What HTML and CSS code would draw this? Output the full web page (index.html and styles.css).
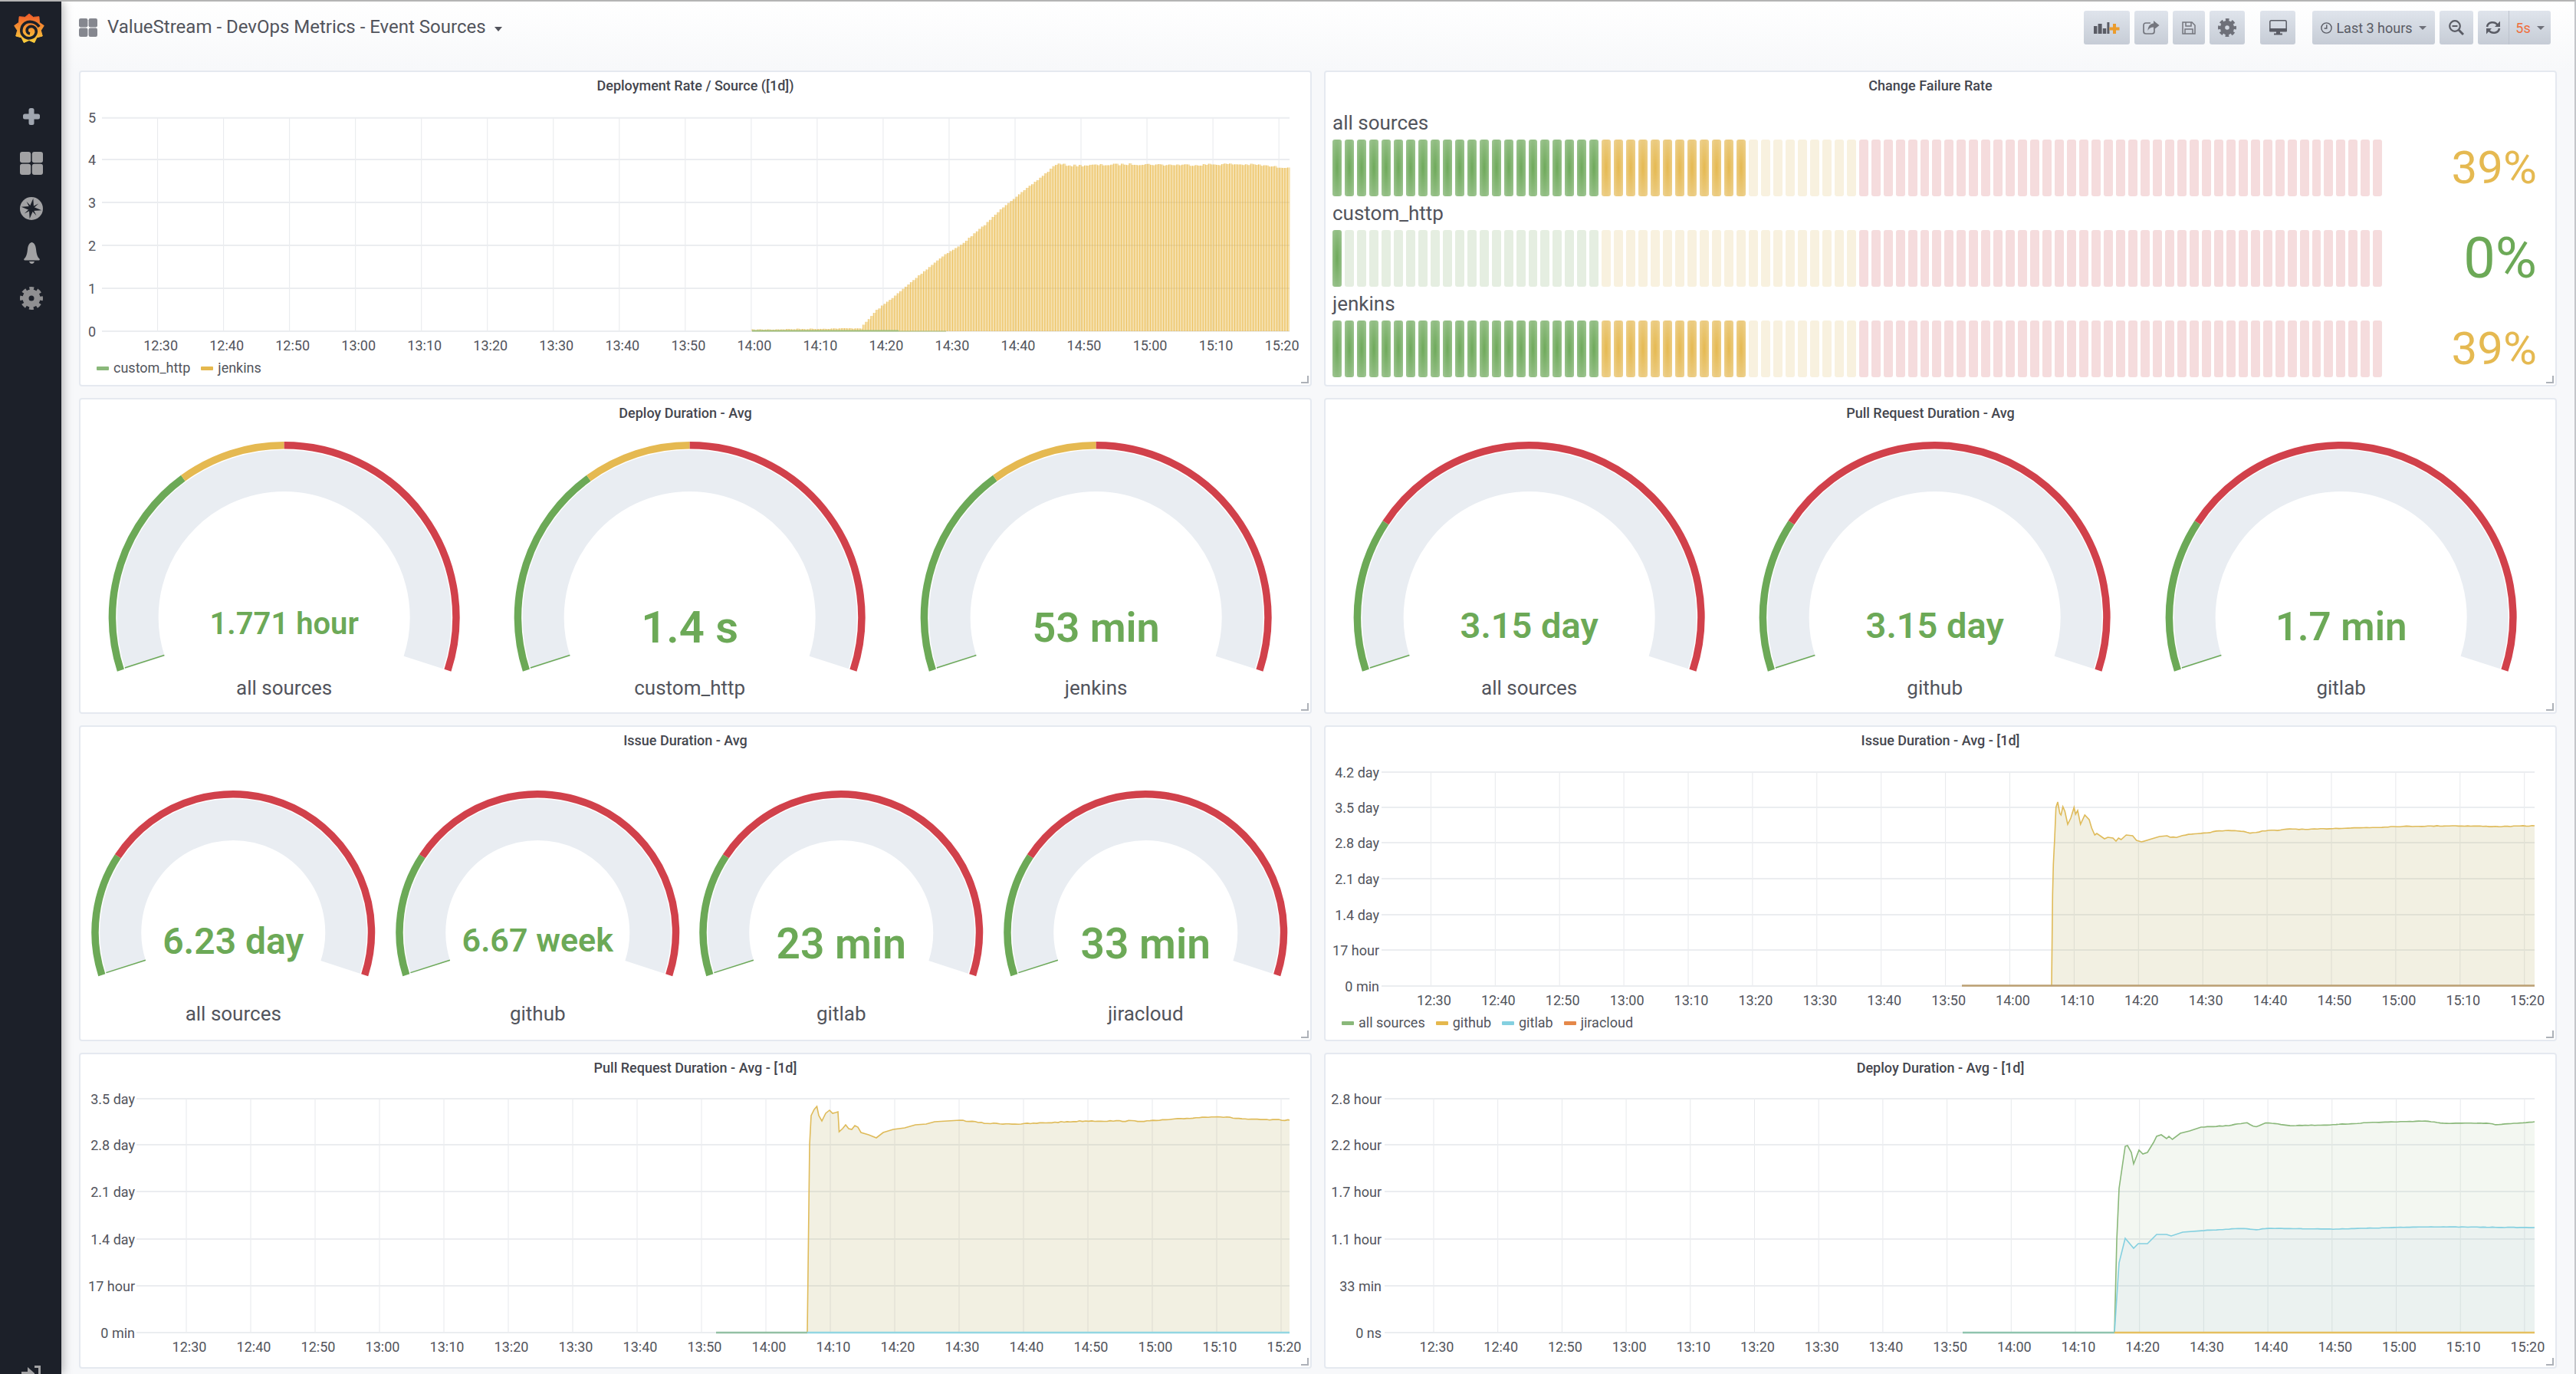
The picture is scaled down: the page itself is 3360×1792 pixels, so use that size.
FILE: index.html
```html
<!DOCTYPE html>
<html>
<head>
    <meta http-equiv="Content-Type" content="text/html; charset=utf-8" />
    <title>ValueStream - DevOps Metrics - Event Sources</title>
    <link rel="stylesheet" href="styles.css">
    <script src="script.js"></script>
</head>
<body>
<div class="app">
    <aside class="sidemenu">
        <svg class="logo" width="40" height="40" viewBox="0 0 40 40">
            <defs>
                <linearGradient id="logoGrad" x1="0" y1="0" x2="0" y2="1">
                    <stop offset="0" stop-color="#ef5a2a"/>
                    <stop offset="1" stop-color="#fbd03c"/>
                </linearGradient>
            </defs>
            <polygon fill="url(#logoGrad)" stroke="url(#logoGrad)" stroke-width="1" stroke-linejoin="round" points="20,1 25.3,5.4 32.9,4.7 33.4,12.3 39.3,16.5 35.3,22.7 37.3,30 30,31.9 26.8,38.6 20,35.5 13.2,38.6 10,31.9 2.7,30 4.7,22.7 0.7,16.5 6.6,12.3 7.1,4.7 14.7,5.4"/>
            <path fill="none" stroke="#1c2029" stroke-width="3.6" d="M33 18 C29 11 20 10 15 13 C9 17 8 26 13 30 C18 35 27 33 29 26 C30.5 20 25 16 20 18 C16 20 16 26 21 27"/>
        </svg>
        <div class="side-item side-item-first">
            <svg width="22" height="22" viewBox="0 0 22 22"><rect x="7.5" y="0" width="7" height="22" rx="2.5" fill="#a0a6b0"/><rect x="0" y="7.5" width="22" height="7" rx="2.5" fill="#a0a6b0"/></svg>
        </div>
        <div class="side-item">
            <svg width="30" height="30" viewBox="0 0 30 30" fill="#a2a2a4"><rect width="14.2" height="14.2" rx="3"/><rect x="15.8" width="14.2" height="14.2" rx="3"/><rect y="15.8" width="14.2" height="14.2" rx="3"/><rect x="15.8" y="15.8" width="14.2" height="14.2" rx="3"/></svg>
        </div>
        <div class="side-item">
            <svg width="30" height="30" viewBox="0 0 30 30"><circle cx="15" cy="15" r="15" fill="#a2a2a4"/><g transform="rotate(10 15 15)"><polygon fill="#1c2029" points="15,1.5 17.6,12.4 28.5,15 17.6,17.6 15,28.5 12.4,17.6 1.5,15 12.4,12.4"/><polygon fill="#1c2029" points="23,7 17,15 23,23 15,17 7,23 13,15 7,7 15,13"/></g></svg>
        </div>
        <div class="side-item">
            <svg width="23" height="28" viewBox="0 0 22 28" fill="#a2a2a4"><path d="M11 0 C7 1 6 5 5.5 9 C5 14 4 19 1 21.5 Q0 23 1.5 23.5 H20.5 Q22 23 21 21.5 C18 19 17 14 16.5 9 C16 5 15 1 11 0 Z"/><path d="M7.5 25 h7 q-1 3 -3.5 3 q-2.5 0 -3.5 -3 z"/></svg>
        </div>
        <div class="side-item">
            <svg width="30" height="30" viewBox="0 0 30 30" fill="none" stroke="#8f8f91"><circle cx="15" cy="15" r="7.5" stroke-width="8"/><circle cx="15" cy="15" r="12.5" stroke-width="5" stroke-dasharray="5.6 4.2" stroke-dashoffset="2.8"/></svg>
        </div>
        <svg class="side-bottom" width="26" height="28" viewBox="0 0 26 28" fill="#a2a2a4"><path d="M0 8 L8 8 L8 2 L17 10 V20 H0 Z"/><path d="M17 0 H25 V26 H17 V23 H22 V3 H17 Z"/></svg>
    </aside>

    <main class="main">
        <nav class="navbar">
            <svg class="nav-grid" width="24" height="24" viewBox="0 0 24 24" fill="#85878f"><rect width="11.4" height="11.4" rx="2.2"/><rect x="12.6" width="11.4" height="11.4" rx="2.2"/><rect y="12.6" width="11.4" height="11.4" rx="2.2"/><rect x="12.6" y="12.6" width="11.4" height="11.4" rx="2.2"/></svg>
            <span class="nav-title">ValueStream - DevOps Metrics - Event Sources</span>
            <i class="caret caret-title"></i>
            <div class="toolbar">
                <div class="btn btn-add">
                    <svg width="34" height="16" viewBox="0 0 34 16"><g fill="#5a5c65"><rect y="6" width="4.4" height="10"/><rect x="5.6" y="3" width="5" height="13"/><rect x="11.8" y="9" width="4.4" height="7"/><rect x="17.4" y="1" width="3" height="15"/></g><rect x="25" y="3" width="4" height="13" fill="#eb9c2d"/><rect x="20.5" y="7.5" width="13" height="4" fill="#eb9c2d"/></svg>
                </div>
                <div class="btn btn-share">
                    <svg width="22" height="18" viewBox="0 0 22 18"><path fill="none" stroke="#74767e" stroke-width="1.7" d="M10 3 H4 Q1 3 1 6 V14 Q1 17 4 17 H12 Q15 17 15 14 V11"/><path fill="#74767e" d="M14 0 L21.5 6 L14 12 V8.5 C10 8.5 8 10 6.5 13 C6.5 8 9 4 14 3.5 Z"/></svg>
                </div>
                <div class="btn btn-save">
                    <svg width="18" height="17" viewBox="0 0 18 17" fill="none" stroke="#74767e" stroke-width="1.5"><path d="M1 1 H13 L17 5 V16 H1 Z"/><path d="M5 1 V6 H12 V1"/><path d="M4 16 V10 H14 V16"/></svg>
                </div>
                <div class="btn btn-gear">
                    <svg width="24" height="24" viewBox="0 0 30 30" fill="none" stroke="#6e7079"><circle cx="15" cy="15" r="7.5" stroke-width="8"/><circle cx="15" cy="15" r="12.5" stroke-width="5" stroke-dasharray="5.6 4.2" stroke-dashoffset="2.8"/></svg>
                </div>
                <div class="btn btn-tv">
                    <svg width="23" height="20" viewBox="0 0 23 20" fill="#5a5c65"><path fill="none" stroke="#5a5c65" stroke-width="1.5" d="M2.5 0.8 H20.5 Q22.2 0.8 22.2 2.5 V13 H0.8 V2.5 Q0.8 0.8 2.5 0.8 Z"/><rect y="11" width="23" height="4.5" rx="1"/><rect x="9" y="15" width="5" height="3"/><rect x="6" y="17.5" width="11" height="2"/></svg>
                </div>
                <div class="btn btn-time">
                    <svg width="15" height="15" viewBox="0 0 15 15" fill="none" stroke="#5a5c65" stroke-width="1.4"><circle cx="7.5" cy="7.5" r="6.6"/><path d="M7.8 3.2 V8 H4.6"/></svg>
                    <span class="time-text">Last 3 hours</span>
                    <i class="caret"></i>
                </div>
                <div class="btn btn-zoom">
                    <svg width="20" height="20" viewBox="0 0 20 20" fill="none" stroke="#5a5c65"><circle cx="8" cy="8" r="6.8" stroke-width="2.2"/><path stroke-width="3" d="M13 13 L19 19"/><path stroke-width="2" d="M4.5 8 H11.5"/></svg>
                </div>
                <div class="btn btn-refresh">
                    <div class="refresh-icon">
                        <svg width="20" height="18" viewBox="0 0 20 18" fill="none" stroke="#5a5c65" stroke-width="2.6"><path d="M2 8 C3 1.5 12 0 16 6"/><path d="M18 10 C17 16.5 8 18 4 12"/><polygon fill="#5a5c65" stroke="none" points="19,0.5 19,8 12,8"/><polygon fill="#5a5c65" stroke="none" points="1,17.5 1,10 8,10"/></svg>
                    </div>
                    <div class="refresh-rate"><span class="rate-text">5s</span><i class="caret"></i></div>
                </div>
            </div>
        </nav>

        <div class="dash-grid">
            <section class="panel">
                <div class="panel-title">Deployment Rate / Source ([1d])</div>
                <svg class="graph" id="graph1"></svg>
                <div class="legend">
                    <span class="legend-item"><i class="swatch c-green"></i>custom_http</span>
                    <span class="legend-item"><i class="swatch c-yellow"></i>jenkins</span>
                </div>
            </section>

            <section class="panel">
                <div class="panel-title title-left">Change Failure Rate</div>
                <div class="bar-list" id="barList"></div>
            </section>

            <section class="panel">
                <div class="panel-title title-left">Deploy Duration - Avg</div>
                <div class="gauges" id="gauges1"></div>
            </section>

            <section class="panel">
                <div class="panel-title title-left">Pull Request Duration - Avg</div>
                <div class="gauges" id="gauges2"></div>
            </section>

            <section class="panel">
                <div class="panel-title title-left">Issue Duration - Avg</div>
                <div class="gauges" id="gauges3"></div>
            </section>

            <section class="panel">
                <div class="panel-title">Issue Duration - Avg - [1d]</div>
                <svg class="graph" id="graph2"></svg>
                <div class="legend">
                    <span class="legend-item"><i class="swatch c-green"></i>all sources</span>
                    <span class="legend-item"><i class="swatch c-yellow"></i>github</span>
                    <span class="legend-item"><i class="swatch c-blue"></i>gitlab</span>
                    <span class="legend-item"><i class="swatch c-orange"></i>jiracloud</span>
                </div>
            </section>

            <section class="panel">
                <div class="panel-title">Pull Request Duration - Avg - [1d]</div>
                <svg class="graph" id="graph3"></svg>
            </section>

            <section class="panel">
                <div class="panel-title">Deploy Duration - Avg - [1d]</div>
                <svg class="graph" id="graph4"></svg>
            </section>
        </div>
    </main>
</div>
</body>
</html>
```

FILE: styles.css
```css
*{ margin: 0; padding: 0; box-sizing: border-box;}
html, body{ height: 100%; overflow: hidden;}
body{ font-family: Roboto, "Liberation Sans", sans-serif; color: #52545c; background: #f7f8fa; border-top: 2px solid #b4b4b4; border-right: 2px solid #c4c6ca;}
.app{ display: flex; height: 100%;}

/* left menu */
.sidemenu{ width: 80px; flex: none; height: 100%; background: #1c2029; display: flex; flex-direction: column; align-items: center; padding-top: 15px; overflow: hidden; box-shadow: 2px 0 12px rgba(0,0,0,.3); position: relative; z-index: 2;}
.logo{ flex: none; margin-left: -4px;}
.side-item{ width: 100%; height: 58.5px; flex: none; display: flex; align-items: center; justify-content: center; padding-right: 0; margin-left: 2px;}
.side-item-first{ height: 65px; margin-top: 62px;}
.side-bottom{ flex: none; margin-top: auto; margin-bottom: -17px; margin-left: 2px;}

/* top bar */
.main{ flex: 1; min-width: 0; padding: 0 23px; background: linear-gradient(#fff 0, #f7f8fa 90px);}
.navbar{ height: 90px; display: flex; align-items: flex-start;}
.nav-grid{ margin-top: 22px; flex: none;}
.nav-title{ font-size: 24px; line-height: 44px; margin-top: 11px; margin-left: 13px; color: #52545c;}
.caret{ display: inline-block; width: 0; height: 0; border-left: 5px solid transparent; border-right: 5px solid transparent; border-top: 5px solid #6e7079;}
.caret-title{ margin: 33px 0 0 11px; border-left-width: 5.5px; border-right-width: 5.5px; border-top-width: 6px; border-top-color: #52545c;}
.toolbar{ margin-left: auto; margin-top: 12px; margin-right: 8px; display: flex; gap: 6px;}
.btn{ height: 44px; border-radius: 3px; background: linear-gradient(#dfe4ec, #c6ccd6); display: flex; align-items: center; justify-content: center;}
.btn-add{ width: 60px;}
.btn-share{ width: 44px;}
.btn-save{ width: 42px;}
.btn-gear{ width: 46px;}
.btn-tv{ width: 46px; margin-left: 14px;}
.btn-time{ width: 160px; margin-left: 16px; gap: 5px;}
.time-text{ font-size: 18px; color: #5a5c65;}
.btn-time .caret{ margin-left: 3px;}
.btn-zoom{ width: 44px;}
.btn-refresh{ width: 95px; justify-content: flex-start;}
.refresh-icon{ width: 41px; height: 100%; display: flex; align-items: center; justify-content: center; border-right: 1px solid #bcc2cc;}
.refresh-rate{ flex: 1; display: flex; align-items: center; justify-content: center; gap: 8px;}
.rate-text{ font-size: 18px; color: #ef6f3c;}

/* dashboard */
.dash-grid{ display: grid; grid-template-columns: 1608px 1608px; grid-auto-rows: 412px; column-gap: 16px; row-gap: 15px;}
.panel{ position: relative; background: #fff; border: 2px solid #e5e9f0; border-radius: 4px;}
.panel::after{ content: ""; position: absolute; right: 2px; bottom: 2px; width: 8px; height: 8px; border-right: 2px solid #adb1b8; border-bottom: 2px solid #adb1b8;}
.panel-title{ height: 38px; line-height: 36px; text-align: center; font-size: 18px; font-weight: 500; color: #44464e; white-space: nowrap;}
.title-left{ padding-right: 26px;}

.graph{ display: block;}
.grid-h{ stroke: #ebedf0; stroke-width: 2;}
.grid-v{ stroke: #e7e9ec; stroke-width: 1;}
.tick{ font-size: 18px; fill: #52545c;}
.tick-y{ text-anchor: end;}
.tick-x{ text-anchor: middle;}

.legend{ height: 30px; line-height: 30px; padding-left: 21px; display: flex; gap: 14px; font-size: 18px; color: #52545c;}
.legend-item{ display: flex; align-items: center;}
.swatch{ width: 16px; height: 5px; border-radius: 1px; margin-right: 6px;}
.c-green{ background: #8ab87a;}
.c-yellow{ background: #e5b84d;}
.c-blue{ background: #84d0e0;}
.c-orange{ background: #e5884a;}

/* bar gauges */
.bar-list{ padding: 6px 24px 0 9px;}
.bar-row{ display: grid; grid-template-columns: 1369px 1fr; grid-template-rows: 44px 74px;}
.bar-label{ grid-column: 1; grid-row: 1; font-size: 26px; line-height: 44px; color: #52545c;}
.bar-cells{ grid-column: 1; grid-row: 2; display: flex; gap: 4px;}
.bar-value{ grid-column: 2; grid-row: 2; font-size: 60px; line-height: 74px; text-align: right;}
.bar-value-big{ font-size: 74px;}
.cell{ flex: 1; border-radius: 3px;}
.g-on{ background: radial-gradient(ellipse at center, #6ea95a 0, #a2c796 100%);}
.y-on{ background: radial-gradient(ellipse at center, #e5b951 0, #eed394 100%);}
.g-off{ background: #e5eee1;}
.y-off{ background: #f8f1df;}
.r-off{ background: #f5dcdd;}
.txt-yellow{ color: #e5b951;}
.txt-green{ color: #6ca957;}

/* gauges */
.gauges{ display: flex; padding-left: 1px;}
.gauge{ display: block; flex: none;}
.gauge-value{ font-weight: 600; fill: #6ca957; text-anchor: middle;}
.gauge-label{ font-size: 26px; fill: #52545c; text-anchor: middle;}
```

FILE: script.js
```js
window.onload = function()
{
    var NS = "http://www.w3.org/2000/svg";

    function el(name, attrs, parent)
    {
        var o = document.createElementNS(NS, name);
        for(var k in attrs)
        {
            o.setAttribute(k, attrs[k]);
        }
        if(parent) parent.appendChild(o);
        return o;
    }

    // small seeded random so the noise stays the same on every load
    var seed = 7;
    function rnd()
    {
        seed = (seed * 16807) % 2147483647;
        return seed / 2147483647 - 0.5;
    }

    function yAt(points, x)
    {
        for(var i = 1; i < points.length; i++)
        {
            if(x <= points[i][0])
            {
                var a = points[i-1], b = points[i];
                return a[1] + (b[1] - a[1]) * (x - a[0]) / (b[0] - a[0]);
            }
        }
        return points[points.length-1][1];
    }

    function wiggle(points, fromX, step, amp)
    {
        var out = [];
        for(var i = 0; i < points.length; i++)
        {
            if(points[i][0] <= fromX) out.push(points[i]);
        }
        var last = points[points.length-1][0];
        for(var x = fromX + step; x < last; x += step)
        {
            out.push([x, yAt(points, x) + rnd() * amp]);
        }
        out.push(points[points.length-1]);
        return out;
    }

    function ptsToStr(points)
    {
        return points.map(function(p){ return p[0].toFixed(1) + "," + p[1].toFixed(1); }).join(" ");
    }

    var times = ["12:30","12:40","12:50","13:00","13:10","13:20","13:30","13:40","13:50","14:00",
                 "14:10","14:20","14:30","14:40","14:50","15:00","15:10","15:20"];

    /* axes shared by all graph panels, numbers are page pixels */
    function drawAxes(g)
    {
        var oSvg = document.getElementById(g.id);
        oSvg.setAttribute("width", 1604);
        oSvg.setAttribute("height", g.h);
        oSvg.setAttribute("viewBox", g.x + " " + g.y + " 1604 " + g.h);

        var top = g.yTicks[0][1], bottom = g.yTicks[g.yTicks.length-1][1];
        for(var i = 0; i < times.length; i++)
        {
            var tx = g.t0 + g.dt * i;
            el("line", {x1: tx, x2: tx, y1: top, y2: bottom, "class": "grid-v"}, oSvg);
            var t = el("text", {x: tx + 4, y: bottom + 24.5, "class": "tick tick-x"}, oSvg);
            t.textContent = times[i];
        }
        for(var j = 0; j < g.yTicks.length; j++)
        {
            var ly = g.yTicks[j][1];
            el("line", {x1: g.x0, x2: g.x1, y1: ly, y2: ly, "class": "grid-h"}, oSvg);
            var l = el("text", {x: g.labelX, y: ly + 6.5, "class": "tick tick-y"}, oSvg);
            l.textContent = g.yTicks[j][0];
        }
        return oSvg;
    }

    function drawSeries(oSvg, points, base, line, fill)
    {
        var area = points.slice();
        area.push([points[points.length-1][0], base]);
        area.push([points[0][0], base]);
        el("polygon", {points: ptsToStr(area), fill: fill}, oSvg);
        el("polyline", {points: ptsToStr(points), fill: "none", stroke: line, "stroke-width": 1.6}, oSvg);
    }

    function drawBase(oSvg, x1, x2, y, color)
    {
        el("line", {x1: x1, x2: x2, y1: y, y2: y, stroke: color, "stroke-width": 2.4}, oSvg);
    }

    /* deployment rate, drawn as thin stacked bars */
    var rate = drawAxes({id: "graph1", x: 105, y: 132, h: 333, x0: 133, x1: 1682, t0: 205.6, dt: 86.03, labelX: 125,
        yTicks: [["5",153.7],["4",208],["3",264],["2",320],["1",376],["0",432]]});
    var ratePts = [[981,430],[1122,428],[1142,405],[1170,383],[1197,360],[1230,333],[1252,320],[1285,292],
                   [1310,268],[1337,247],[1367,223],[1376,214],[1400,216],[1440,215],[1480,214],[1520,215],
                   [1560,215],[1600,214],[1640,215],[1665,218],[1682,218]];
    var areaPts = [];
    for(var bx = 981; bx < 1682; bx += 3.44)
    {
        var by = yAt(ratePts, bx) + (bx > 1376 ? rnd() * 2.6 : rnd() * 1.2);
        areaPts.push([bx, by]);
        areaPts.push([bx + 3.44, by]);
        el("line", {x1: bx, x2: bx, y1: by, y2: 432, stroke: "rgba(230,170,40,.62)", "stroke-width": 1}, rate);
    }
    areaPts.push([1682, 432]);
    areaPts.push([981, 432]);
    el("polygon", {points: ptsToStr(areaPts), fill: "rgba(232,181,60,.42)"}, rate);
    el("line", {x1: 981, x2: 1172, y1: 431.5, y2: 431.5, stroke: "#9ebd7a", "stroke-width": 2}, rate);
    el("line", {x1: 1172, x2: 1234, y1: 432, y2: 432, stroke: "#a9bd7a", "stroke-width": 1}, rate);

    /* issue duration */
    var issue = drawAxes({id: "graph2", x: 1729, y: 986, h: 333, x0: 1802, x1: 3306, t0: 1866.4, dt: 83.9, labelX: 1799,
        yTicks: [["4.2 day",1007],["3.5 day",1053],["2.8 day",1099],["2.1 day",1146],["1.4 day",1193],["17 hour",1239],["0 min",1286]]});
    var issuePts = [[2676,1285],[2677.3,1167],[2678.3,1127],[2680,1093],[2681.7,1053],[2684,1046],[2686.7,1061],[2688.3,1063],
        [2690.7,1052],[2693.3,1058],[2697,1075],[2701,1067],[2705.3,1053],[2707.3,1062],[2710,1057],[2713.7,1075],[2719.3,1063],
        [2725,1069],[2728.3,1080],[2732.3,1089],[2735,1087],[2745,1094],[2749.3,1092],[2756,1093],[2760,1097],[2763.3,1093],
        [2766.7,1095],[2773.3,1089],[2781.7,1090],[2786.7,1096],[2793.3,1098],[2806.7,1094],[2816.7,1091],[2826.7,1090],
        [2831.7,1092],[2840,1092],[2848.3,1089],[2873.3,1087],[2880,1086],[2891.7,1084],[2910,1083],[2925,1084],[2935,1087],
        [2945,1085],[2956.7,1083],[2973,1083],[2986.7,1081],[3010,1082],[3026.7,1081],[3060,1080],[3103,1079],[3120,1078],
        [3200,1077],[3260,1078],[3306,1077]];
    drawSeries(issue, wiggle(issuePts, 2826.7, 4, 0.8), 1286, "#dfbb5a", "rgba(172,160,77,.16)");
    drawBase(issue, 2559, 3306, 1285.5, "#bb9f72");

    /* pull request duration */
    var pull = drawAxes({id: "graph3", x: 105, y: 1413, h: 370, x0: 178, x1: 1682, t0: 243, dt: 84, labelX: 176,
        yTicks: [["3.5 day",1433],["2.8 day",1493],["2.1 day",1554],["1.4 day",1616],["17 hour",1677],["0 min",1738]]});
    var pullPts = [[1053,1738],[1056,1493],[1058,1455],[1062,1447],[1065.5,1443],[1068,1455],[1072,1462],[1077,1452],[1082,1448],
        [1086,1452],[1090,1451],[1093,1450],[1094.5,1476],[1099,1472],[1103,1467],[1107,1472],[1111,1473],[1115,1468],[1119,1470],
        [1123,1477],[1133,1480],[1143,1484],[1152,1477],[1165,1473],[1180,1471],[1194,1467],[1208,1466],[1219,1463],[1252,1461],
        [1270,1463],[1285,1465],[1330,1466],[1414,1462],[1500,1462],[1586,1456],[1630,1460],[1682,1461]];
    drawSeries(pull, wiggle(pullPts, 1252, 4, 1.3), 1738, "#dfbb5a", "rgba(172,160,77,.16)");
    drawBase(pull, 934, 1053, 1738, "#93c0a4");
    drawBase(pull, 1053, 1682, 1738, "#93d6e2");

    /* deploy duration */
    var deploy = drawAxes({id: "graph4", x: 1729, y: 1413, h: 370, x0: 1806, x1: 3306, t0: 1870, dt: 83.7, labelX: 1802,
        yTicks: [["2.8 hour",1433],["2.2 hour",1493],["1.7 hour",1554],["1.1 hour",1616],["33 min",1677],["0 ns",1738]]});
    var greenPts = [[2758,1738],[2761,1617],[2764,1550],[2772,1495],[2775,1494],[2780,1503],[2783,1518],[2790,1500],[2795,1505],
        [2801,1503],[2809,1490],[2813,1482],[2819,1480],[2826,1485],[2829,1482],[2833.5,1486],[2844,1478],[2856,1475],[2871,1470],
        [2908,1468],[2930,1464],[2942,1470],[2957,1464],[2988,1468],[3043,1467],[3092,1464],[3165,1462],[3184,1465],[3245,1465],
        [3257,1467],[3306,1463]];
    var tealPts = [[2758,1738],[2764,1647],[2772,1615],[2783,1628],[2789,1622],[2801,1622],[2813,1610],[2826,1610],[2832,1612],
        [2847,1607],[2871.5,1605],[2927,1602],[2942,1604],[2957,1602],[3043,1603],[3165,1600],[3306,1601]];
    drawSeries(deploy, wiggle(greenPts, 2871, 4, 0.7), 1738, "#8ab87a", "rgba(162,195,148,.13)");
    drawSeries(deploy, wiggle(tealPts, 2871, 4, 0.5), 1738, "#84d0e0", "rgba(151,196,229,.09)");
    drawBase(deploy, 2560, 2758, 1738, "#8fc4ae");
    drawBase(deploy, 2758, 3306, 1738, "#e5c060");

    /* change failure rate */
    var barRows = [
        {name: "all sources", on: 34, value: "39%", color: "txt-yellow"},
        {name: "custom_http", on: 1, value: "0%", color: "txt-green", big: true},
        {name: "jenkins", on: 34, value: "39%", color: "txt-yellow"}
    ];
    var oList = document.getElementById("barList");
    for(var r = 0; r < barRows.length; r++)
    {
        var row = barRows[r];
        var html = "";
        for(var c = 0; c < 86; c++)
        {
            var zone = c < 22 ? "g" : (c < 43 ? "y" : "r");
            html += '<div class="cell ' + zone + (c < row.on ? "-on" : "-off") + '"></div>';
        }
        oList.innerHTML += '<div class="bar-row"><div class="bar-label">' + row.name + '</div>' +
            '<div class="bar-cells">' + html + '</div>' +
            '<div class="bar-value ' + row.color + (row.big ? " bar-value-big" : "") + '">' + row.value + '</div></div>';
    }

    /* gauges: angle 0 is straight up, they run from -108 to +108 degrees */
    function polar(cx, cy, r, deg)
    {
        var a = deg * Math.PI / 180;
        return [cx + r * Math.sin(a), cy - r * Math.cos(a)];
    }

    function arc(oSvg, cx, cy, r, from, to, width, color)
    {
        var p1 = polar(cx, cy, r, from), p2 = polar(cx, cy, r, to);
        var large = (to - from) > 180 ? 1 : 0;
        el("path", {d: "M" + p1[0] + " " + p1[1] + " A" + r + " " + r + " 0 " + large + " 1 " + p2[0] + " " + p2[1],
            fill: "none", stroke: color, "stroke-width": width}, oSvg);
    }

    function drawGauges(id, opt, list)
    {
        var oBox = document.getElementById(id);
        for(var i = 0; i < list.length; i++)
        {
            var oSvg = el("svg", {"class": "gauge", width: opt.w, height: 370, viewBox: "0 0 " + opt.w + " 370"}, oBox);
            var cx = opt.w / 2, cy = opt.cy, R = opt.r;
            var stops = [-108, -108 + 216 * opt.green];
            if(opt.yellow) stops.push(-108 + 216 * opt.yellow);
            stops.push(108);
            var colors = opt.yellow ? ["#6ca957", "#e5b951", "#d1414b"] : ["#6ca957", "#d1414b"];
            arc(oSvg, cx, cy, R - 38, -108, 108, 54, "#e9edf2");
            for(var s = 0; s < colors.length; s++)
            {
                arc(oSvg, cx, cy, R - 4.75, stops[s], stops[s+1], 9.5, colors[s]);
            }
            var a = polar(cx, cy, R - 11, -107.6), b = polar(cx, cy, R - 65, -107.6);
            el("line", {x1: a[0], y1: a[1], x2: b[0], y2: b[1], stroke: "#6ca957", "stroke-width": 1.5}, oSvg);

            var v = el("text", {x: cx, y: list[i].vy + list[i].fs * 0.355, "class": "gauge-value", "font-size": list[i].fs}, oSvg);
            v.textContent = list[i].value;
            var l = el("text", {x: cx, y: opt.labelY, "class": "gauge-label"}, oSvg);
            l.textContent = list[i].name;
        }
    }

    var top2 = 559, top3 = 986;
    var big = {w: 529.33, r: 229, cy: 805 - top2, labelY: 906 - top2, green: 1/3, yellow: 0.5};
    drawGauges("gauges1", big, [
        {value: "1.771 hour", name: "all sources", fs: 40, vy: 813 - top2},
        {value: "1.4 s", name: "custom_http", fs: 58, vy: 817 - top2},
        {value: "53 min", name: "jenkins", fs: 54, vy: 818 - top2}
    ]);
    drawGauges("gauges2", {w: 529.33, r: 229, cy: 805 - top2, labelY: 906 - top2, green: 0.238}, [
        {value: "3.15 day", name: "all sources", fs: 47, vy: 815 - top2},
        {value: "3.15 day", name: "github", fs: 47, vy: 815 - top2},
        {value: "1.7 min", name: "gitlab", fs: 51, vy: 817 - top2}
    ]);
    drawGauges("gauges3", {w: 396.5, r: 185, cy: 1216 - top3, labelY: 1331 - top3, green: 0.238}, [
        {value: "6.23 day", name: "all sources", fs: 48, vy: 1227 - top3},
        {value: "6.67 week", name: "github", fs: 43, vy: 1226 - top3},
        {value: "23 min", name: "gitlab", fs: 55, vy: 1230 - top3},
        {value: "33 min", name: "jiracloud", fs: 55, vy: 1230 - top3}
    ]);
};
```
